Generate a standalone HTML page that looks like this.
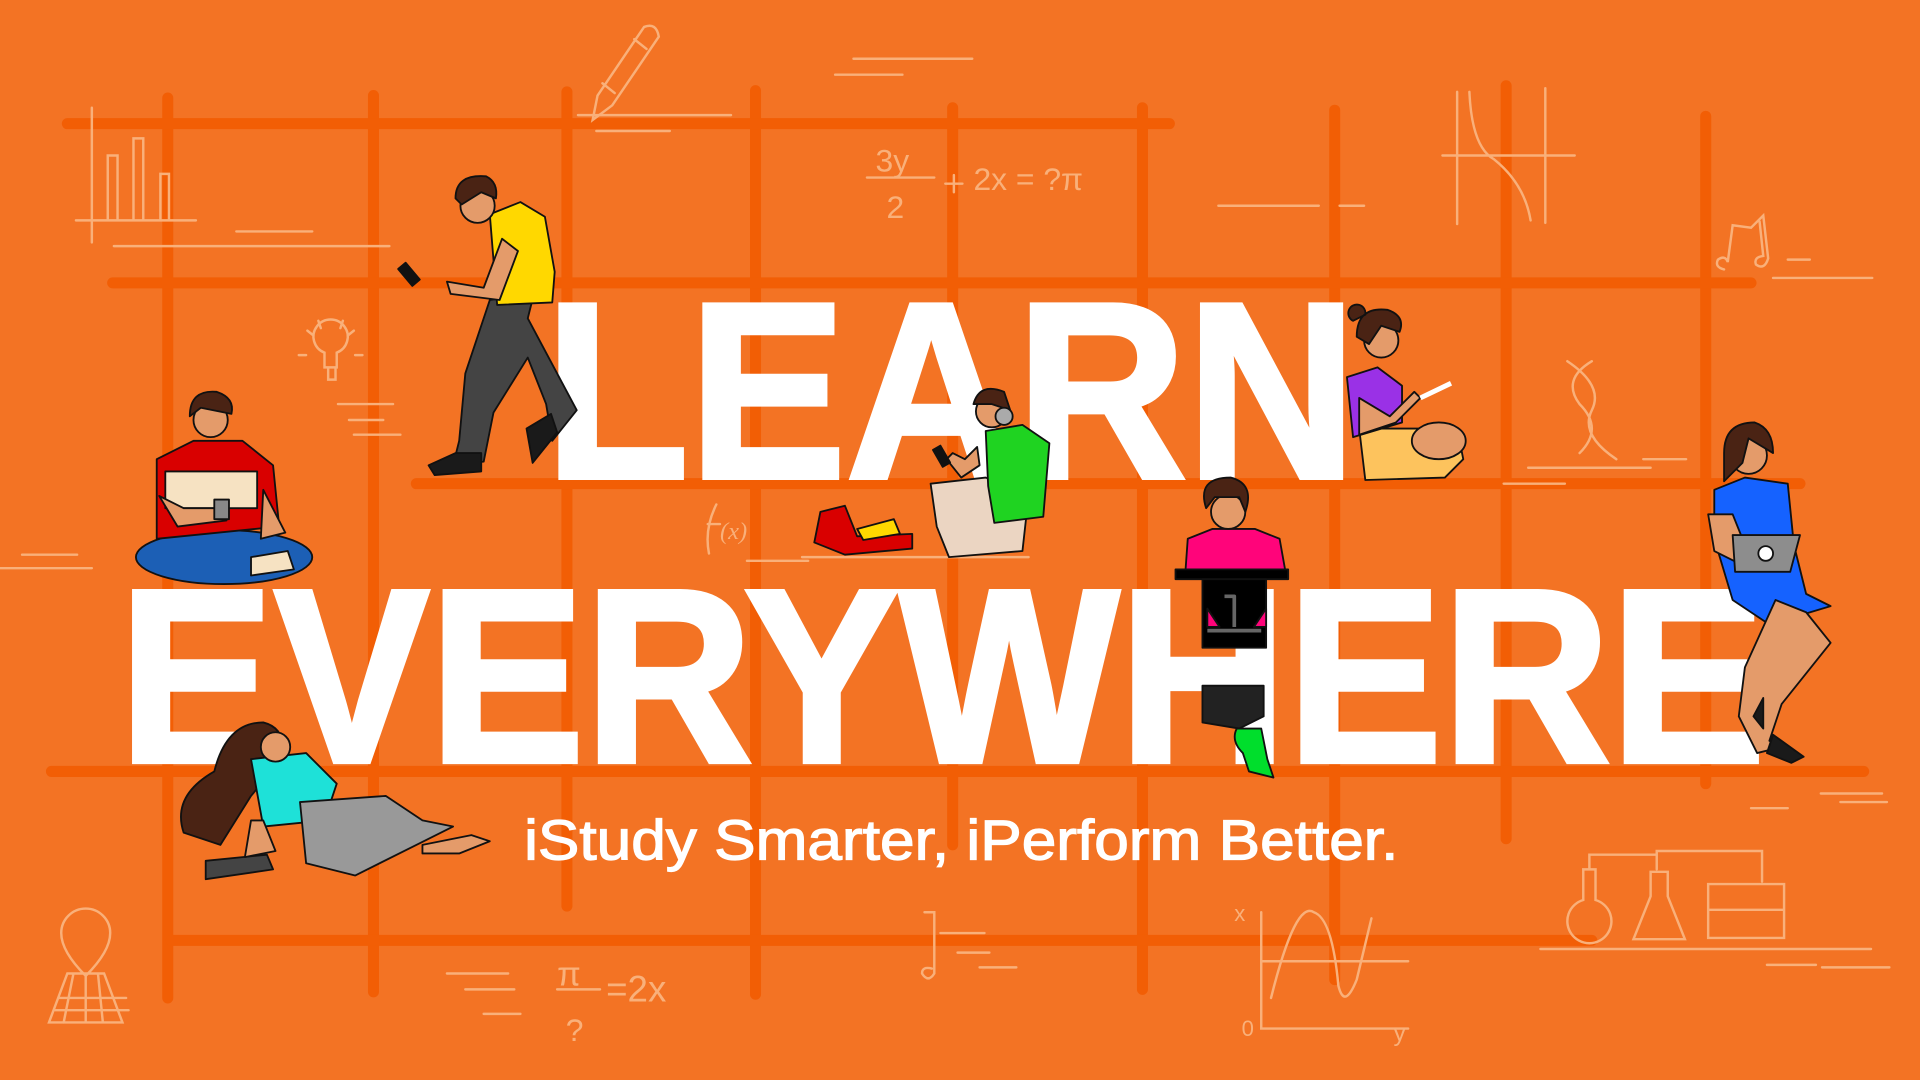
<!DOCTYPE html>
<html><head><meta charset="utf-8"><style>
html,body{margin:0;padding:0;width:1920px;height:1080px;overflow:hidden;background:#F37324}
svg{display:block}
</style></head><body>
<svg width="1920" height="1080" viewBox="0 0 1568 882" preserveAspectRatio="none" xmlns="http://www.w3.org/2000/svg">
<rect width="1568" height="882" fill="#F37324"/>
<g stroke="#F25E05" stroke-width="9" stroke-linecap="round">
<line x1="137" y1="80" x2="137" y2="815"/>
<line x1="305" y1="78" x2="305" y2="810"/>
<line x1="463" y1="75" x2="463" y2="740"/>
<line x1="617" y1="74" x2="617" y2="812"/>
<line x1="778" y1="88" x2="778" y2="690"/>
<line x1="933" y1="88" x2="933" y2="808"/>
<line x1="1090" y1="90" x2="1090" y2="800"/>
<line x1="1230" y1="70" x2="1230" y2="685"/>
<line x1="1393" y1="95" x2="1393" y2="640"/>
<line x1="55" y1="101" x2="955" y2="101"/>
<line x1="92" y1="231" x2="1430" y2="231"/>
<line x1="340" y1="395" x2="1470" y2="395"/>
<line x1="42" y1="630" x2="1522" y2="630"/>
<line x1="140" y1="768" x2="1300" y2="768"/>
</g>
<g stroke="#F9B07A" stroke-width="2" fill="none" stroke-linecap="round">
<path d="M75 88V198M62 180H160M88 180V127h8v53M109 180V113h8v67M131 180V142h7v38"/>
<path d="M193 189h62M93 201h225M472 94h125M487 107h60M697 48h97M682 61h55"/>
<path d="M488 78l38-56q10-4 12 8l-38 56-16 12zM492 68l10 8M518 32l10 8"/>
<path d="M708 145h55M772 150h14M779 143v14"/>
<text x="715" y="140" font-family="Liberation Sans,sans-serif" font-size="26" fill="#F9B07A" stroke="none">3y</text>
<text x="724" y="178" font-family="Liberation Sans,sans-serif" font-size="26" fill="#F9B07A" stroke="none">2</text>
<text x="795" y="155" font-family="Liberation Sans,sans-serif" font-size="26" fill="#F9B07A" stroke="none">2x = ?π</text>
<path d="M1190 75V183M1178 127h108M1200 75q2 45 20 55 25 20 30 50M1262 72v110M995 168h82M1094 168h20"/>
<path d="M1408 220q-8-2-5-8 6-4 8 2l4-30 15 2 10-10 4 35q-3 10-10 5-2-6 6-7l-3-28M1460 212h18M1448 227h81"/>
<path d="M1280 295q30 20 20 40-10 20 20 40M1300 295q-25 15-10 35 20 20 0 40"/>
<path d="M1248 382h100M1342 375h35M1228 395h50"/>
<path d="M265 288a14 14 0 1 1 10 0v12h-10zM268 300v10h6v-10M256 274l-5-4M284 274l5-4M262 268l-2-6M278 268l2-6M250 290h-6M290 290h6"/>
<path d="M276 330h45M285 343h28M289 355h38"/>
<path d="M0 464h75M18 453h45"/>
<path d="M585 412q-10 20-6 40M578 428h10"/>
<text x="588" y="440" font-family="Liberation Serif,serif" font-style="italic" font-size="20" fill="#F9B07A" stroke="none">(x)</text>
<path d="M655 455h185M610 458h50"/>
<path d="M1487 648h50M1503 655h38M1430 660h30"/>
<path d="M50 762a20 20 0 1 1 40 0q0 15-20 35-20-20-20-35zM40 835l15-40h30l15 40zM48 815h55M45 825h60M60 795l-8 40M80 795l4 40M70 795v40"/>
<path d="M365 795h50M380 808h40M395 828h30"/>
<text x="455" y="805" font-family="Liberation Sans,sans-serif" font-size="28" fill="#F9B07A" stroke="none">π</text>
<path d="M455 808h35"/>
<text x="462" y="850" font-family="Liberation Sans,sans-serif" font-size="26" fill="#F9B07A" stroke="none">?</text>
<text x="495" y="818" font-family="Liberation Sans,sans-serif" font-size="30" fill="#F9B07A" stroke="none">=2x</text>
<path d="M755 745l8 0v50q-5 8-10 0 0-6 8-4M768 762h36M782 778h26M800 790h30"/>
<path d="M1030 745v95h120M1030 785h120M1038 815q20-80 35-70 15 5 20 60 5 20 15-5l12-50"/>
<text x="1008" y="752" font-family="Liberation Sans,sans-serif" font-size="18" fill="#F9B07A" stroke="none">x</text>
<text x="1014" y="846" font-family="Liberation Sans,sans-serif" font-size="18" fill="#F9B07A" stroke="none">0</text>
<text x="1138" y="850" font-family="Liberation Sans,sans-serif" font-size="20" fill="#F9B07A" stroke="none">y</text>
<path d="M1293 710h10v25a18 18 0 1 1-10 0zM1348 712h14v20l14 35h-42l14-35zM1395 722h62v44h-62zM1395 743h62M1298 710v-12h55v12M1353 710v-15h86v25M1258 775h270M1488 790h55M1443 788h40"/>
</g>
<g font-family="Liberation Sans,Arial,sans-serif" font-weight="bold" fill="#FFFFFF" stroke="#FFFFFF">
<text x="445" y="390" font-size="205" stroke-width="4" textLength="663" lengthAdjust="spacingAndGlyphs">LEARN</text>
<text x="97" y="622" font-size="202" stroke-width="4" textLength="1345" lengthAdjust="spacingAndGlyphs">EVERYWHERE</text>
<text x="428" y="702" font-size="46" stroke-width="1" textLength="714" lengthAdjust="spacingAndGlyphs" font-weight="normal">iStudy Smarter, iPerform Better.</text>
</g>
<g stroke="#111" stroke-width="1.5" stroke-linejoin="round">
<path d="M400 245l-20 60-5 55-5 20 25-3 8-40 28-45 15 38 5 30 20-25-40-75 5-20z" fill="#444"/>
<path d="M372 370l-22 10 5 8 38-3v-15zM430 350l20-12 5 15-20 25z" fill="#1a1a1a"/>
<path d="M400 175l25-10 20 12 8 45-2 25-45 2z" fill="#FFD800"/>
<path d="M410 195l-15 40-30-5 3 10 40 5 15-40z" fill="#E49B6A"/>
<rect x="330" y="215" width="8" height="18" transform="rotate(-40 334 224)" fill="#111"/>
<circle cx="390" cy="168" r="14" fill="#E49B6A"/>
<path d="M372 162q0-20 25-18 10 5 8 18l-12-5-16 10z" fill="#4a2314"/>
<ellipse cx="183" cy="455" rx="72" ry="22" fill="#1C5FB5"/>
<path d="M128 375l30-15h40l25 20 5 50-100 10z" fill="#D90000"/>
<path d="M135 385h75v30h-75z" fill="#F6E2C2"/>
<path d="M130 405l15 25 40-5v-10l-35 0zM215 400l18 35-20 5z" fill="#E49B6A"/>
<rect x="175" y="408" width="12" height="16" fill="#888"/>
<circle cx="172" cy="343" r="14" fill="#E49B6A"/>
<path d="M155 340q0-22 22-20 15 5 12 18l-25-5z" fill="#4a2314"/>
<path d="M205 455l30-5 5 15-35 5z" fill="#F6E2C2"/>
<path d="M760 395l45-5 35 15-5 45-60 5-10-25z" fill="#EBD5C2"/>
<path d="M670 418l20-5 10 25 45-2v12l-55 5-25-10z" fill="#D90000"/>
<path d="M700 432l30-8 5 12-30 5z" fill="#FFD800"/>
<path d="M805 352l30-5 22 15-5 60-40 5-5-30z" fill="#1FD321"/>
<path d="M800 380l-15 10-12-15 5-5 10 5 10-10z" fill="#E49B6A"/>
<rect x="765" y="365" width="7" height="16" transform="rotate(-30 768 372)" fill="#111"/>
<circle cx="810" cy="336" r="13" fill="#E49B6A"/>
<path d="M795 330q5-18 25-10l5 15-15-5z" fill="#4a2314"/>
<circle cx="820" cy="340" r="7" fill="#aaa"/>
<path d="M1110 350h80l5 25-15 15-65 2z" fill="#FDC35D"/>
<ellipse cx="1175" cy="360" rx="22" ry="15" fill="#E49B6A"/>
<path d="M1100 308l25-8 20 15v30l-40 12z" fill="#9A31E6"/>
<path d="M1110 325v30l30-10 20-20-5-5-20 20z" fill="#E49B6A"/>
<path d="M1160 325l25-12" stroke="#fff" stroke-width="4"/>
<circle cx="1128" cy="278" r="14" fill="#E49B6A"/>
<path d="M1108 275q0-25 25-22 15 5 10 18l-15-5-10 15zM1105 262a7 7 0 1 1 10-5z" fill="#4a2314"/>
<path d="M970 440l20-8h35l20 8 5 28h-82z" fill="#FF047A"/>
<circle cx="1003" cy="418" r="14" fill="#E49B6A"/>
<path d="M985 415q-8-25 20-25 20 5 12 28l-5-12-20 0z" fill="#4a2314"/>
<rect x="960" y="465" width="92" height="8" fill="#000"/>
<rect x="982" y="473" width="52" height="56" fill="#000"/>
<path d="M1000 487h8v25M986 515h44" stroke="#666" stroke-width="3" fill="none"/>
<path d="M986 497l10 15h-10zM1034 497l-10 15h10z" fill="#FF047A"/>
<path d="M982 560h50v25l-20 10-30-5z" fill="#222"/>
<path d="M1010 595q-5 10 5 20l5 15 20 5-5-15-5-25z" fill="#00DE2C"/>
<path d="M1400 400l25-10 35 5 5 50 10 40 20 10-50 15-30-20-15-50z" fill="#1562FF"/>
<path d="M1450 490l25 10 20 25-40 50-10 30 10 5-20 5-15-30 5-40z" fill="#E49B6A"/>
<path d="M1440 570l-8 15 8 10zM1448 600l-5 15 20 8 10-5z" fill="#1a1a1a"/>
<path d="M1395 420l5 30 20 10 35-5v-10l-30 0-10-25z" fill="#E49B6A"/>
<path d="M1415 437h55l-8 30h-45z" fill="#8d8d8d"/>
<circle cx="1442" cy="452" r="6" fill="#fff"/>
<circle cx="1428" cy="372" r="15" fill="#E49B6A"/>
<path d="M1408 370q0-25 25-25 15 5 15 25l-20-12-5 20-15 15z" fill="#4a2314"/>
<path d="M150 680q-10-30 25-50 10-40 40-40 20 5 15 30l-25 30-25 40z" fill="#4a2314"/>
<path d="M205 620l45-5 25 25-10 30-50 5z" fill="#1EE1D8"/>
<path d="M245 655l70-5 30 20 25 5-30 15-50 25-40-10z" fill="#999"/>
<path d="M345 690l40-8 15 5-25 10-30 0z" fill="#E49B6A"/>
<path d="M168 703l50-5 5 12-55 8z" fill="#444"/>
<path d="M205 670l-5 30 25-5-10-25z" fill="#E49B6A"/>
<circle cx="225" cy="610" r="12" fill="#E49B6A"/>
</g>
</svg>
</body></html>
